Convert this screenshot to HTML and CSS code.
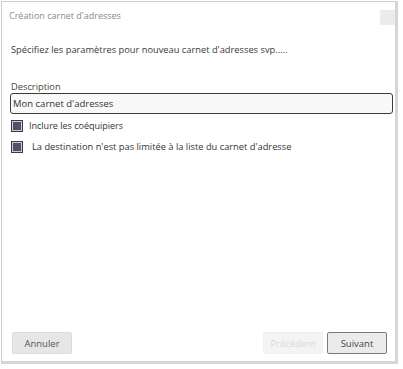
FILE: index.html
```html
<!DOCTYPE html>
<html lang="fr">
<head>
<meta charset="utf-8">
<link rel="stylesheet" href="styles.css">
</head>
<body>
<div class="dialog">
  <div class="titlebar">
    <span class="title">Création carnet d'adresses</span>
    <span class="close"></span>
  </div>
  <div class="content">
    <p class="intro">Spécifiez les paramètres pour nouveau carnet d'adresses svp.....</p>
    <label class="label">Description</label>
    <div class="input">Mon carnet d'adresses</div>
    <div class="check check1"><span class="box"></span><span class="ctext">Inclure les coéquipiers</span></div>
    <div class="check check2"><span class="box"></span><span class="ctext">La destination n'est pas limitée à la liste du carnet d'adresse</span></div>
  </div>
  <div class="footer">
    <button class="btn">Annuler</button>
    <div class="spacer"></div>
    <button class="btn disabled">Précédent</button>
    <button class="btn primary">Suivant</button>
  </div>
</div>
</body>
</html>
```
FILE: styles.css
```css
html, body { margin: 0; padding: 0; background: #fff; }
body { font-family: "Open Sans", "Noto Sans", sans-serif; font-size: 9.3px; color: #333; }
.dialog {
  width: 397px; height: 363px;
  margin: 1px 0 0 1px;
  border: 1px solid #cfcfcf;
  border-right: 3px solid #d6d6d6;
  border-bottom: 3px solid #d6d6d6;
  box-sizing: border-box;
  display: flex; flex-direction: column;
  background: #fff;
}
.titlebar { display: flex; align-items: flex-start; justify-content: space-between; padding: 7px 0 0 7px; height: 28px; box-sizing: border-box; }
.title { color: #8a8a8a; font-size: 9px; line-height: 14px; }
.close { width: 15px; height: 15px; background: #ececec; margin-top: 1px; }
.content { padding: 13px 0 0 9px; flex: 1; }
.intro { margin: 0; line-height: 14px; color: #3a3a3a; }
.label { display: block; margin-top: 24px; line-height: 12px; color: #444; }
.input {
  margin-top: 0; width: 383px; height: 21px; box-sizing: border-box;
  margin-left: -1px;
  border: 1px solid #3a3a3a; border-radius: 3px; background: #f9f9f9;
  padding: 0 2px; line-height: 19px; color: #333; font-size: 9.5px;
}
.check { display: flex; align-items: center; margin-top: 5px; height: 13px; }
.check2 { margin-top: 8px; }
.box {
  width: 12px; height: 12px; box-sizing: border-box;
  border: 1px solid #3c3c3c; background: #4e5468;
  box-shadow: inset 0 0 0 1px #c9ccd4;
  flex: none;
}
.ctext { margin-left: 6px; line-height: 13px; color: #333; }
.check1 .ctext { font-size: 9px; }
.check2 .ctext { margin-left: 9px; }
.footer { display: flex; align-items: center; padding: 0 8px 7px 10px; gap: 4px; }
.spacer { flex: 1; }
.btn {
  width: 60px; height: 22px; box-sizing: border-box;
  font-family: inherit; font-size: 9.5px; color: #555;
  border: 1px solid #dcdcdc; border-radius: 2px; background: #e6e6e6;
  padding: 0;
}
.btn.disabled { color: #d8d8d8; background: #f4f4f4; border-color: #efefef; }
.btn.primary { border-color: #7a7a7a; background: #ebebeb; color: #444; }
```
